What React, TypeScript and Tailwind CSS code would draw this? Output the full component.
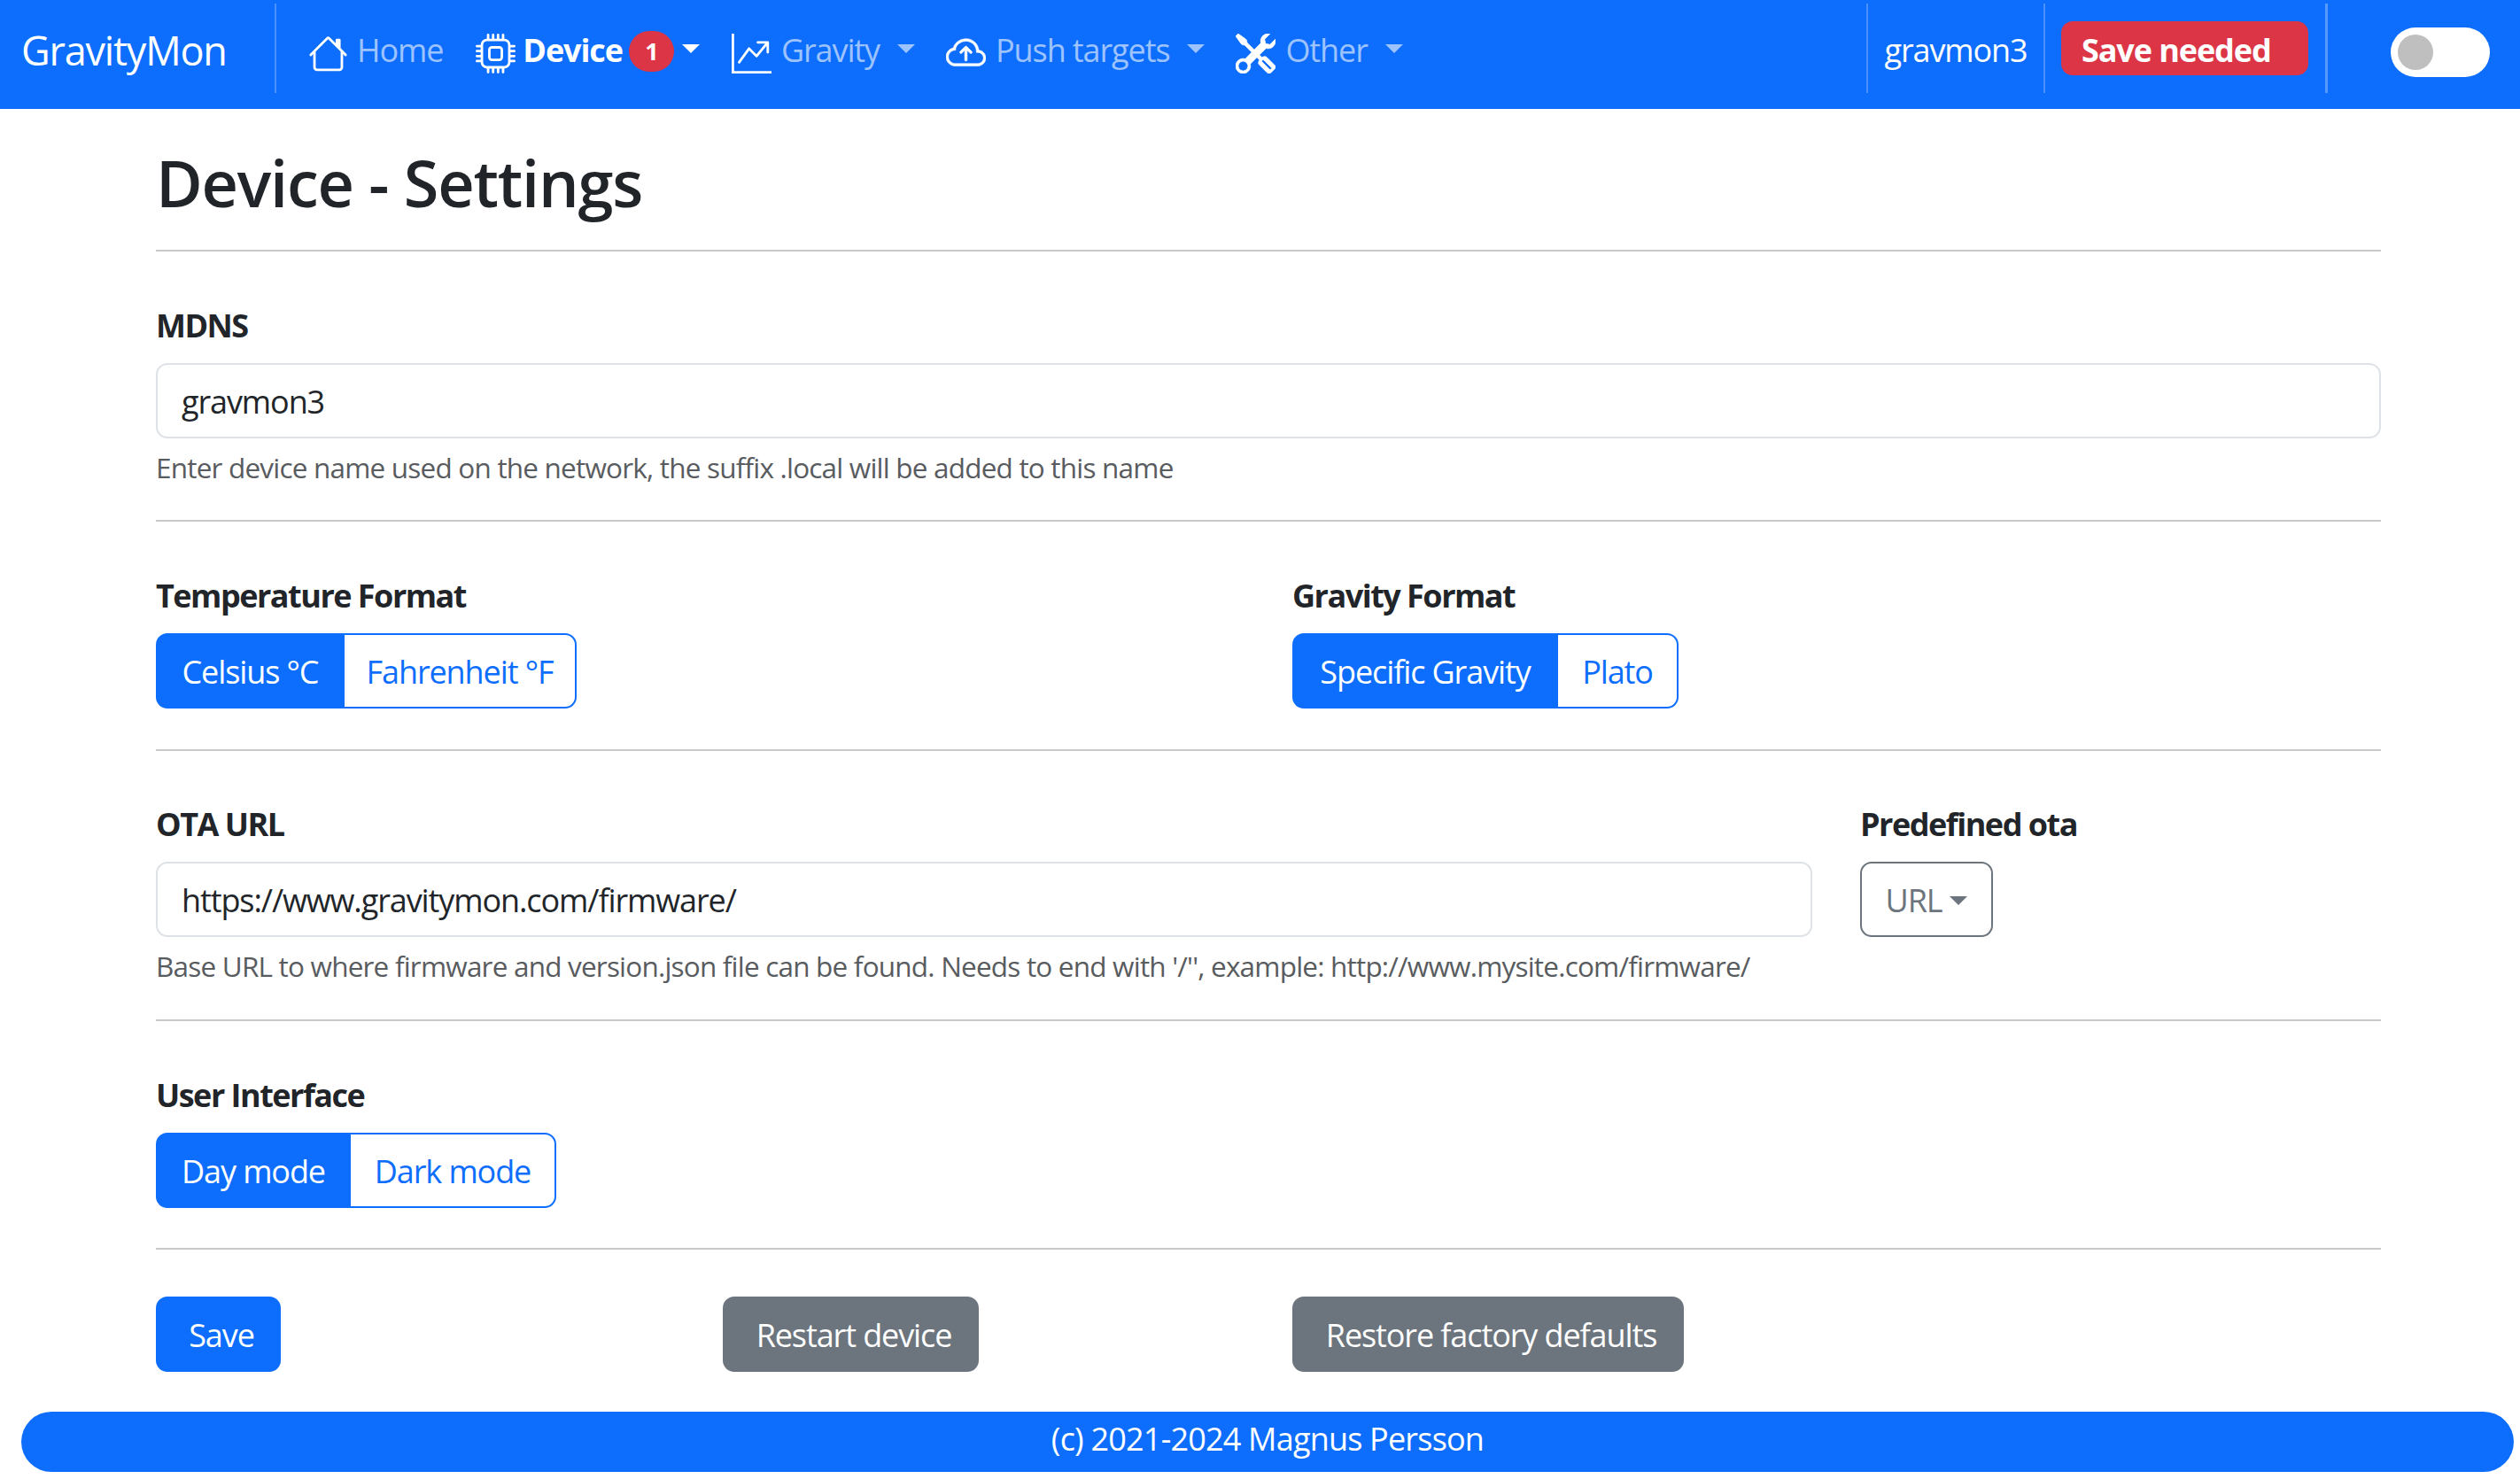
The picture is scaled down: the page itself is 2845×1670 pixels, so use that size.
import { BsCloudArrowUp, BsCpu, BsGraphUpArrow, BsHouse, BsTools } from "react-icons/bs";

const Caret = ({ className }: { className: string }) => (
  <span className={"inline-block w-0 h-0 border-x-[10px] border-x-transparent border-t-[10px] " + className} />
);

const Divider = () => <div className="w-[2px] h-[101px] mb-[5px] bg-white/25" />;

const NavItem = ({ icon, label, gap }: { icon: React.ReactNode; label: string; gap: string }) => (
  <div className={"flex items-center text-[#9dc3fe] " + gap}>
    <span className="text-white text-[45px] leading-none mt-[6px]">{icon}</span>
    <span className="ml-[11px]">{label}</span>
    <Caret className="ml-[20px] mb-[4px] border-t-[#9dc3fe]" />
  </div>
);

const Toggle = ({ options, widths }: { options: string[]; widths: string[] }) => (
  <div className="flex h-[85px]">
    <div className={"flex items-center justify-center pt-[2px] bg-[#0d6efd] text-white rounded-l-[13px] " + widths[0]}>{options[0]}</div>
    <div className={"flex items-center justify-center pt-[2px] bg-white text-[#0d6efd] border-2 border-l-0 border-[#0d6efd] rounded-r-[13px] " + widths[1]}>{options[1]}</div>
  </div>
);

const Label = ({ children }: { children: React.ReactNode }) => (
  <div className="font-bold tracking-[-1.5px] h-[54px] leading-[57px] mb-[17px]">{children}</div>
);

const TextInput = ({ value }: { value: string }) => (
  <div className="h-[85px] pt-[2px] border-2 border-[#dee2e6] rounded-[13px] px-[27px] flex items-center text-[#212529]">{value}</div>
);

const Help = ({ children }: { children: React.ReactNode }) => (
  <div className="mt-[9px] h-[47px] leading-[47px] text-[31.5px] tracking-[-0.8px] text-[#595c5f]">{children}</div>
);

const Hr = () => <div className="h-[2px] bg-[#c8c9ca]" />;

export default function App() {
  return (
    <div className="min-h-[1670px] bg-white text-[#212529] text-[36px] tracking-[-1.1px] font-['Open_Sans',sans-serif]">
      {/* navbar */}
      <nav className="h-[123px] pb-[9px] bg-[#0d6efd] flex items-center text-[36px]">
        <div className="ml-[24px] w-[286px] text-white text-[45px] tracking-[-1.2px]">GravityMon</div>
        <Divider />
        <div className="flex items-center ml-[36px] text-[#9dc3fe] mr-[37px]">
          <span className="text-white text-[45px] leading-none mt-[6px]"><BsHouse /></span>
          <span className="ml-[10px]">Home</span>
        </div>
        <div className="flex items-center text-white font-bold mr-[36px]">
          <span className="text-[45px] leading-none mt-[6px]"><BsCpu /></span>
          <span className="ml-[8px]">Device</span>
          <span className="ml-[7px] mt-[2px] w-[51px] h-[46px] rounded-full bg-[#dc3545] flex items-center justify-center text-[27px]">1</span>
          <Caret className="ml-[9px] mb-[4px] border-t-white" />
        </div>
        <NavItem icon={<BsGraphUpArrow />} label="Gravity" gap="mr-[35px]" />
        <NavItem icon={<BsCloudArrowUp className="stroke-current [stroke-width:0.2]" />} label="Push targets" gap="mr-[35px]" />
        <NavItem icon={<BsTools className="stroke-current [stroke-width:0.25]" />} label="Other" gap="" />
        <div className="ml-auto flex items-center text-white">
          <Divider />
          <div className="w-[198px] text-center">gravmon3</div>
          <Divider />
          <div className="ml-[18px] mr-[19px] mb-[5px] w-[279px] h-[61px] bg-[#dc3545] rounded-[13px] font-bold pl-[23px] leading-[65px]">Save needed</div>
          <div className="w-[3px] h-[101px] mb-[5px] bg-white/30" />
          <div className="ml-[71px] mr-[34px] mt-[4px] w-[112px] h-[56px] bg-white rounded-full flex items-center pl-[8px]">
            <div className="w-[40px] h-[40px] rounded-full bg-[#bfbfbf]" />
          </div>
        </div>
      </nav>

      <main className="ml-[176px] w-[2512px]">
        <h1 className="h-[159px] leading-[166px] text-[72px] font-semibold tracking-[-1.2px]">Device - Settings</h1>
        <Hr />

        <section className="pt-[55px] pb-[36px]">
          <Label>MDNS</Label>
          <TextInput value="gravmon3" />
          <Help>Enter device name used on the network, the suffix .local will be added to this name</Help>
        </section>
        <Hr />

        <section className="pt-[55px] pb-[46px] grid grid-cols-[1283px_1fr]">
          <div>
            <Label>Temperature Format</Label>
            <Toggle options={["Celsius °C", "Fahrenheit °F"]} widths={["w-[213px]", "w-[262px]"]} />
          </div>
          <div>
            <Label>Gravity Format</Label>
            <Toggle options={["Specific Gravity", "Plato"]} widths={["w-[300px]", "w-[136px]"]} />
          </div>
        </section>
        <Hr />

        <section className="pt-[54px] pb-[37px] grid grid-cols-[1870px_1fr] gap-x-[54px]">
          <div>
            <Label>OTA URL</Label>
            <TextInput value="https://www.gravitymon.com/firmware/" />
            <Help>Base URL to where firmware and version.json file can be found. Needs to end with '/'', example: http://www.mysite.com/firmware/</Help>
          </div>
          <div>
            <Label>Predefined ota</Label>
            <div className="w-[150px] h-[85px] pt-[2px] border-2 border-[#6c757d] rounded-[13px] text-[#6c757d] flex items-center justify-center">
              URL
              <Caret className="ml-[9px] border-t-[#6c757d]" />
            </div>
          </div>
        </section>
        <Hr />

        <section className="pt-[55px] pb-[45px]">
          <Label>User Interface</Label>
          <Toggle options={["Day mode", "Dark mode"]} widths={["w-[220px]", "w-[232px]"]} />
        </section>
        <Hr />

        <section className="pt-[53px] grid grid-cols-[640px_643px_1fr]">
          <div className="w-[141px] h-[85px] pl-[7px] pt-[2px] bg-[#0d6efd] text-white rounded-[13px] flex items-center justify-center">Save</div>
          <div className="w-[289px] h-[85px] pl-[7px] pt-[2px] bg-[#6c757d] text-white rounded-[13px] flex items-center justify-center">Restart device</div>
          <div className="w-[442px] h-[85px] pl-[7px] pt-[2px] bg-[#6c757d] text-white rounded-[13px] flex items-center justify-center">Restore factory defaults</div>
        </section>
      </main>

      <footer className="mt-[45px] mr-[7px] ml-[24px] h-[68px] pb-[6px] tracking-[-0.8px] rounded-full bg-[#0d6efd] text-white flex items-center justify-center">
        (c) 2021-2024 Magnus Persson
      </footer>
    </div>
  );
}
